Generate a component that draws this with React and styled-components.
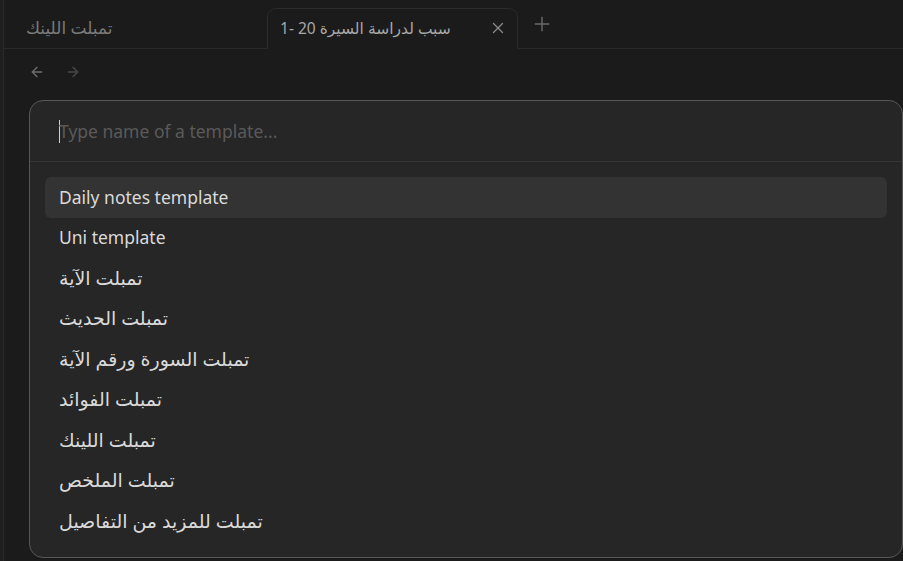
import React from "react";
import styled, { createGlobalStyle } from "styled-components";

const Global = createGlobalStyle`
  html, body { margin: 0; padding: 0; background: #1b1b1b; }
  body { font-family: "Noto Sans", "DejaVu Sans", sans-serif; }
  #root { width: 903px; height: 561px; overflow: hidden; }
`;

const Shell = styled.div`
  position: relative;
  width: 903px;
  height: 561px;
  display: flex;
  background: #1b1b1b;
  overflow: hidden;
`;

const SideStrip = styled.div`
  width: 3px;
  flex: none;
  background: #1f1f1f;
  border-right: 1px solid #2a2a2a;
`;

const Main = styled.div`
  flex: 1;
  display: flex;
  flex-direction: column;
  min-width: 0;
`;

const TabBar = styled.div`
  height: 49px;
  flex: none;
  display: flex;
  align-items: flex-end;
  border-bottom: 1px solid #2a2a2a;
  box-sizing: border-box;
  padding-left: 9px;
`;

const Tab = styled.div`
  box-sizing: border-box;
  width: ${(p) => p.$w}px;
  height: ${(p) => (p.$active ? 41 : 40)}px;
  margin-bottom: ${(p) => (p.$active ? -1 : 0)}px;
  display: flex;
  align-items: center;
  padding: 0 10px 2px 12px;
  border: 1px solid ${(p) => (p.$active ? "#2c2c2c" : "transparent")};
  border-bottom-color: ${(p) => (p.$active ? "#1b1b1b" : "transparent")};
  border-radius: 9px 9px 0 0;
  background: #1b1b1b;
  color: ${(p) => (p.$active ? "#a8a8a8" : "#7a7a7a")};
  font-size: ${(p) => (p.$active ? 15.5 : 17)}px;
  white-space: nowrap;
`;

const TabTitle = styled.span`
  flex: 1;
  overflow: hidden;
`;

const TabClose = styled.span`
  display: flex;
  align-items: center;
  color: #8a8a8a;
`;

const NewTab = styled.div`
  height: 40px;
  display: flex;
  align-items: center;
  padding: 0 0 4px 14px;
  color: #6a6a6a;
`;

const NavRow = styled.div`
  height: 46px;
  display: flex;
  align-items: center;
  gap: 20px;
  padding-left: 25px;
`;

const NavBtn = styled.span`
  display: flex;
  color: ${(p) => (p.$disabled ? "#4a4a4a" : "#6e6e6e")};
`;

const Modal = styled.div`
  position: absolute;
  left: 29px;
  top: 100px;
  width: 874px;
  height: 458px;
  box-sizing: border-box;
  background: #262626;
  border: 1px solid #575757;
  border-radius: 14px;
  display: flex;
  flex-direction: column;
  overflow: hidden;
`;

const InputRow = styled.div`
  height: 61px;
  box-sizing: border-box;
  flex: none;
  display: flex;
  align-items: center;
  padding: 0 29px;
  border-bottom: 1px solid #353535;
`;

const Caret = styled.span`
  width: 1px;
  height: 23px;
  background: #cfcfcf;
  margin-right: -1px;
`;

const Placeholder = styled.span`
  color: #5a5a5a;
  font-size: 17.5px;
  padding-bottom: 1px;
`;

const List = styled.div`
  padding: 15px 15px;
  display: flex;
  flex-direction: column;
`;

const Item = styled.div`
  height: 40.5px;
  box-sizing: border-box;
  display: flex;
  align-items: center;
  padding: 0 14px 1px;
  border-radius: 6px;
  background: ${(p) => (p.$selected ? "#333333" : "transparent")};
  color: #dadada;
  font-size: ${(p) => (p.$ar ? 19 : 17.5)}px;
`;

const ArrowLeft = () => (
  <svg width="16" height="16" viewBox="0 0 24 24" fill="none" stroke="currentColor" strokeWidth="2" strokeLinecap="round" strokeLinejoin="round">
    <path d="M19 12H5" />
    <path d="M12 19l-7-7 7-7" />
  </svg>
);

const ArrowRight = () => (
  <svg width="16" height="16" viewBox="0 0 24 24" fill="none" stroke="currentColor" strokeWidth="2" strokeLinecap="round" strokeLinejoin="round">
    <path d="M5 12h14" />
    <path d="M12 5l7 7-7 7" />
  </svg>
);

const XIcon = () => (
  <svg width="18" height="18" viewBox="0 0 24 24" fill="none" stroke="currentColor" strokeWidth="1.7" strokeLinecap="round">
    <path d="M18 6L6 18" />
    <path d="M6 6l12 12" />
  </svg>
);

const PlusIcon = () => (
  <svg width="20" height="20" viewBox="0 0 24 24" fill="none" stroke="currentColor" strokeWidth="1.7" strokeLinecap="round">
    <path d="M12 4v16" />
    <path d="M4 12h16" />
  </svg>
);

const items = [
  "Daily notes template",
  "Uni template",
  "تمبلت الآية",
  "تمبلت الحديث",
  "تمبلت السورة ورقم الآية",
  "تمبلت الفوائد",
  "تمبلت اللينك",
  "تمبلت الملخص",
  "تمبلت للمزيد من التفاصيل",
];

const isArabic = (t) => /[\u0600-\u06FF]/.test(t);

export default function App() {
  return (
    <>
      <Global />
      <Shell>
        <SideStrip />
        <Main>
          <TabBar>
            <Tab $w={254}>
              <TabTitle>تمبلت اللينك</TabTitle>
            </Tab>
            <Tab $active $w={251}>
              <TabTitle>سبب لدراسة السيرة 20 -1</TabTitle>
              <TabClose>
                <XIcon />
              </TabClose>
            </Tab>
            <NewTab>
              <PlusIcon />
            </NewTab>
          </TabBar>
          <NavRow>
            <NavBtn>
              <ArrowLeft />
            </NavBtn>
            <NavBtn $disabled>
              <ArrowRight />
            </NavBtn>
          </NavRow>
        </Main>
        <Modal>
          <InputRow>
            <Caret />
            <Placeholder>Type name of a template...</Placeholder>
          </InputRow>
          <List>
            {items.map((t, i) => (
              <Item key={t} $selected={i === 0} $ar={isArabic(t)}>
                {t}
              </Item>
            ))}
          </List>
        </Modal>
      </Shell>
    </>
  );
}
